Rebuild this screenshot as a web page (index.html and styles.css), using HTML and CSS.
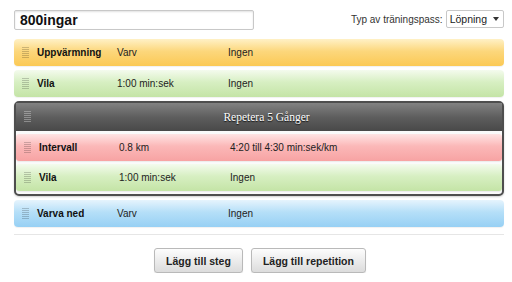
FILE: index.html
```html
<!DOCTYPE html>
<html lang="sv">
<head>
<meta charset="utf-8">
<link rel="stylesheet" href="styles.css">
</head>
<body>
<div class="page">
  <div class="topbar">
    <div class="title-input">800ingar</div>
    <div class="type">
      <span class="type-label">Typ av träningspass:</span>
      <div class="select"><span>Löpning</span><span class="caret"></span></div>
    </div>
  </div>

  <div class="row warm">
    <span class="grip"></span><span class="name">Uppvärmning</span><span class="val">Varv</span><span class="target">Ingen</span>
  </div>
  <div class="row rest">
    <span class="grip"></span><span class="name">Vila</span><span class="val">1:00 min:sek</span><span class="target">Ingen</span>
  </div>

  <div class="repeat">
    <div class="repeat-head">
      <span class="grip grip-dark"></span>
      <span class="repeat-title">Repetera 5 Gånger</span>
    </div>
    <div class="row inner interval">
      <span class="grip"></span><span class="name">Intervall</span><span class="val">0.8 km</span><span class="target">4:20 till 4:30 min:sek/km</span>
    </div>
    <div class="row inner rest">
      <span class="grip"></span><span class="name">Vila</span><span class="val">1:00 min:sek</span><span class="target">Ingen</span>
    </div>
  </div>

  <div class="row cool">
    <span class="grip"></span><span class="name">Varva ned</span><span class="val">Varv</span><span class="target">Ingen</span>
  </div>

  <div class="sep"></div>

  <div class="actions">
    <button class="btn">Lägg till steg</button>
    <button class="btn">Lägg till repetition</button>
  </div>
</div>
</body>
</html>
```

FILE: styles.css
```css
html, body {
  margin: 0;
  padding: 0;
  background: #fff;
  font-family: "Liberation Sans", Arial, sans-serif;
  color: #222;
}
.page {
  width: 490px;
  margin-left: 14px;
  padding-top: 10px;
}
.topbar {
  display: flex;
  justify-content: space-between;
  align-items: flex-start;
  height: 20px;
  margin-bottom: 9px;
}
.title-input {
  width: 233px;
  height: 18px;
  border: 1px solid #c8c8c8;
  border-radius: 2px;
  box-shadow: inset 0 1px 2px rgba(0,0,0,0.12);
  font-weight: bold;
  font-size: 14px;
  line-height: 18px;
  padding-left: 5px;
  color: #111;
}
.type {
  display: flex;
  align-items: center;
  gap: 3px;
  font-size: 10px;
  color: #333;
}
.select {
  display: flex;
  align-items: center;
  gap: 6px;
  height: 16px;
  padding: 0 4px 0 3px;
  border: 1px solid #c8c8c8;
  border-radius: 2px;
  background: #fff;
  font-size: 10.5px;
  color: #222;
}
.caret {
  width: 0;
  height: 0;
  border-left: 3px solid transparent;
  border-right: 3px solid transparent;
  border-top: 4px solid #333;
}
.row {
  display: flex;
  align-items: center;
  height: 27px;
  margin-bottom: 4px;
  padding-left: 8px;
  border-radius: 4px;
  font-size: 10px;
  color: #222;
  box-shadow: 0 1px 1px rgba(0,0,0,0.06);
}
.grip {
  width: 7px;
  height: 12px;
  margin-right: 8px;
  background: repeating-linear-gradient(to bottom, rgba(0,0,0,0.28) 0 1px, transparent 1px 2px);
  opacity: 0.7;
}
.grip-dark {
  background: repeating-linear-gradient(to bottom, rgba(255,255,255,0.45) 0 1px, transparent 1px 2px);
}
.name {
  width: 80px;
  font-weight: bold;
  color: #111;
}
.val {
  width: 111px;
}
.warm {
  background: linear-gradient(to bottom, #fff1c6 0%, #fcd77c 45%, #fbc955 100%);
}
.rest {
  background: linear-gradient(to bottom, #f4fbee 0%, #d7efc2 45%, #c4e4a6 100%);
}
.interval {
  background: linear-gradient(to bottom, #ffe4e4 0%, #fbb8b8 45%, #f7a3a3 100%);
}
.cool {
  background: linear-gradient(to bottom, #e6f4fd 0%, #b5dff8 45%, #97d0f4 100%);
}
.repeat {
  border: 2px solid #4e4e4e;
  border-radius: 5px;
  background: #fafafa;
  margin-bottom: 4px;
  padding-bottom: 3px;
  box-shadow: 0 1px 2px rgba(0,0,0,0.2);
}
.repeat-head {
  display: flex;
  align-items: center;
  height: 28px;
  padding-left: 8px;
  background: linear-gradient(to bottom, #828282 0%, #5e5e5e 50%, #494949 100%);
}
.repeat-title {
  flex: 1;
  text-align: center;
  color: #fff;
  font-family: "Liberation Serif", "Times New Roman", serif;
  font-size: 11.5px;
  text-shadow: 0 1px 1px rgba(0,0,0,0.8);
  padding-right: 8px;
}
.row.inner {
  margin: 3px 0 0 0;
  border-radius: 3px;
}
.sep {
  height: 1px;
  background: #e6e6e6;
  margin-top: 7px;
  margin-bottom: 13px;
}
.actions {
  display: flex;
  justify-content: center;
  gap: 8px;
  padding-left: 2px;
}
.btn {
  height: 25px;
  padding: 0 11px;
  border: 1px solid #b9b9b9;
  border-radius: 3px;
  background: linear-gradient(to bottom, #fdfdfd 0%, #ececec 50%, #dcdcdc 100%);
  font-family: "Liberation Sans", Arial, sans-serif;
  font-weight: bold;
  font-size: 10.5px;
  color: #222;
  box-shadow: 0 1px 1px rgba(0,0,0,0.1);
}
```
